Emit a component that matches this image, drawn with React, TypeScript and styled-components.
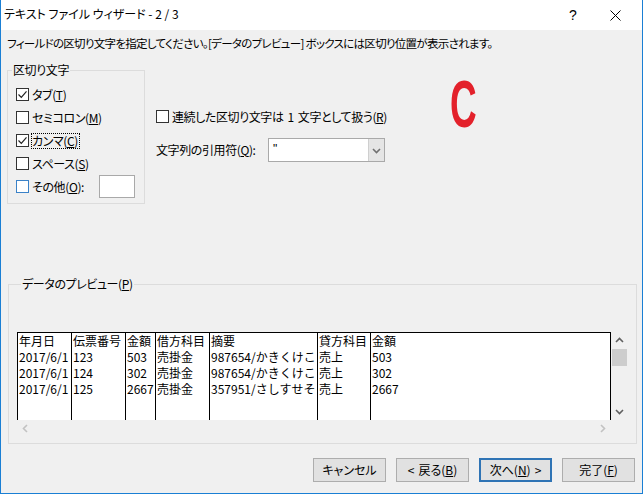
import React from "react";
import styled, { createGlobalStyle } from "styled-components";

const Global = createGlobalStyle`
  html, body { margin: 0; padding: 0; background: #f0f0f0; }
  * { box-sizing: border-box; }
  body { font-family: "Noto Sans CJK JP", "Noto Sans", sans-serif; font-size: 12px; color: #000; }
`;

const Window = styled.div`
  position: relative;
  width: 643px;
  height: 494px;
  border: 1px solid #1a7fd4;
  border-top: none;
  background: #f0f0f0;
  display: flex;
  flex-direction: column;
  overflow: hidden;
  font-feature-settings: "palt";
  letter-spacing: -0.4px;
`;

const TitleBar = styled.div`
  height: 30px;
  background: #fff;
  display: flex;
  align-items: center;
  padding-left: 3px;
  padding-right: 4px;
  flex-shrink: 0;
  letter-spacing: 0;
`;

const Title = styled.div`
  flex: 1;
  font-size: 12px;
  line-height: 14px;
  margin-top: -3px;
`;

const TitleButton = styled.div<{ $w: number }>`
  width: ${(p) => p.$w}px;
  height: 30px;
  display: flex;
  align-items: center;
  justify-content: center;
  font-size: 14px;
  font-family: "Liberation Sans", sans-serif;
`;

const Body = styled.div`
  flex: 1;
  display: flex;
  flex-direction: column;
  padding: 0 7px 9px 6px;
`;

const Instruction = styled.div`
  margin-top: 5px;
  line-height: 16px;
  font-size: 11.5px;
  letter-spacing: -0.7px;
  white-space: nowrap;
`;

const OptionsRow = styled.div`
  display: flex;
  margin-top: 12px;
  align-items: flex-start;
`;

const Group = styled.fieldset<{ $w?: number }>`
  margin: 0;
  ${(p) => (p.$w ? `width: ${p.$w}px;` : "")}
  border: 1px solid #dcdcdc;
  padding: 0;
  min-width: 0;
`;

const Legend = styled.legend`
  padding: 0 1px;
  margin-left: 4px;
  line-height: 14px;
  font-size: 12px;
`;

const DelimList = styled.div`
  display: flex;
  flex-direction: column;
  padding: 6px 0 5px 8px;
`;

const CheckRow = styled.label`
  display: flex;
  align-items: center;
  height: 23px;
  gap: 3px;
  line-height: 14px;
  white-space: nowrap;
`;

const Box = styled.span<{ $blue?: boolean }>`
  width: 13px;
  height: 13px;
  flex-shrink: 0;
  border: 1px solid ${(p) => (p.$blue ? "#3a82c8" : "#333")};
  background: #fff;
  display: flex;
  align-items: center;
  justify-content: center;
`;

const FocusText = styled.span`
  outline: 1px dotted #000;
  outline-offset: 0px;
  padding: 0 1px 0 0;
`;

const SmallInput = styled.div`
  width: 36px;
  height: 23px;
  background: #fff;
  border: 1px solid #a9a9a9;
  margin-left: 12px;
`;

const RightPanel = styled.div`
  display: flex;
  flex-direction: column;
  padding-top: 42px;
  margin-left: 11px;
`;

const Gap = styled.span`
  display: inline-block;
  width: 4px;
`;

const QuoteRow = styled.div`
  display: flex;
  align-items: center;
  margin-top: 10px;
`;

const QuoteLabel = styled.span`
  width: 112px;
  line-height: 14px;
`;

const Combo = styled.div`
  width: 117px;
  height: 24px;
  border: 1px solid #a9a9a9;
  background: #fff;
  display: flex;
`;

const ComboText = styled.div`
  flex: 1;
  padding-left: 4px;
  line-height: 20px;
  font-family: "Liberation Sans", sans-serif;
`;

const ComboButton = styled.div`
  width: 16px;
  background: #e5e5e5;
  border-left: 1px solid #cfcfcf;
  display: flex;
  align-items: center;
  justify-content: center;
`;

const PreviewGroup = styled(Group)`
  margin-top: 73px;
  margin-left: 1px;
  width: 629px;
  padding: 0 0 6px 8px;
`;

const PreviewArea = styled.div`
  margin-top: 41px;
  width: 612px;
  display: grid;
  grid-template-columns: 594px 17px;
  grid-template-rows: 88px 17px;
`;

const Table = styled.div`
  background: #fff;
  border: 1px solid #000;
  border-bottom: none;
  display: flex;
  overflow: hidden;
  font-feature-settings: normal;
  letter-spacing: 0;
  font-size: 12px;
`;

const Col = styled.div<{ $w?: number }>`
  ${(p) => (p.$w ? `width: ${p.$w}px; flex-shrink: 0; border-right: 1px solid #000;` : "flex: 1;")}
  overflow: hidden;
  padding-left: 1px;
`;

const Cell = styled.div`
  height: 16px;
  line-height: 16px;
  white-space: nowrap;
`;

const VScroll = styled.div`
  display: flex;
  flex-direction: column;
  align-items: center;
`;

const ArrowBox = styled.div`
  height: 17px;
  width: 17px;
  display: flex;
  align-items: center;
  justify-content: center;
`;

const Thumb = styled.div`
  width: 15px;
  height: 17px;
  background: #cdcdcd;
`;

const Track = styled.div`
  flex: 1;
`;

const HScroll = styled.div`
  display: flex;
  align-items: center;
  justify-content: space-between;
`;

const Corner = styled.div``;

const ButtonRow = styled.div`
  display: flex;
  justify-content: flex-end;
  gap: 10px;
  margin-top: 14px;
`;

const Button = styled.div<{ $focus?: boolean }>`
  width: 73px;
  height: 24px;
  background: #e1e1e1;
  border: ${(p) => (p.$focus ? "2px solid #2f74b5" : "1px solid #adadad")};
  display: flex;
  align-items: center;
  justify-content: center;
  line-height: 14px;
  white-space: nowrap;
  letter-spacing: 0;
`;

const RedC = styled.div`
  position: absolute;
  left: 449px;
  top: 69px;
  font-family: "Liberation Sans", sans-serif;
  font-weight: bold;
  font-size: 66px;
  line-height: 70px;
  letter-spacing: 0;
  color: #e3212b;
  transform: scaleX(0.56);
  transform-origin: left top;
`;

const Check = () => (
  <svg width="11" height="11" viewBox="0 0 11 11">
    <path d="M1.5 5.5 L4.3 8.3 L9.5 2.3" fill="none" stroke="#222" strokeWidth="1.2" />
  </svg>
);

const Chevron = ({ dir, color }: { dir: "up" | "down" | "left" | "right"; color: string }) => {
  const d =
    dir === "up"
      ? "M1 6 L4.5 2.5 L8 6"
      : dir === "down"
      ? "M1 3 L4.5 6.5 L8 3"
      : dir === "left"
      ? "M6 1 L2.5 4.5 L6 8"
      : "M3 1 L6.5 4.5 L3 8";
  return (
    <svg width="9" height="9" viewBox="0 0 9 9">
      <path d={d} fill="none" stroke={color} strokeWidth="1.6" />
    </svg>
  );
};

const columns: { w?: number; cells: string[] }[] = [
  { w: 54, cells: ["年月日", "2017/6/1", "2017/6/1", "2017/6/1"] },
  { w: 54, cells: ["伝票番号", "123", "124", "125"] },
  { w: 30, cells: ["金額", "503", "302", "2667"] },
  { w: 54, cells: ["借方科目", "売掛金", "売掛金", "売掛金"] },
  { w: 108, cells: ["摘要", "987654/かきくけこ", "987654/かきくけこ", "357951/さしすせそ"] },
  { w: 53, cells: ["貸方科目", "売上", "売上", "売上"] },
  { cells: ["金額", "503", "302", "2667"] },
];

export default function App() {
  return (
    <>
      <Global />
      <Window>
        <TitleBar>
          <Title>テキスト ファイル ウィザード - 2 / 3</Title>
          <TitleButton $w={38}>?</TitleButton>
          <TitleButton $w={46}>
            <svg width="11" height="11" viewBox="0 0 11 11">
              <path d="M0.5 0.5 L10.5 10.5 M10.5 0.5 L0.5 10.5" stroke="#000" strokeWidth="1" />
            </svg>
          </TitleButton>
        </TitleBar>
        <Body>
          <Instruction>
            フィールドの区切り文字を指定してください。[データのプレビュー] ボックスには区切り位置が表示されます。
          </Instruction>
          <OptionsRow>
            <Group $w={138}>
              <Legend>区切り文字</Legend>
              <DelimList>
                <CheckRow>
                  <Box><Check /></Box>
                  <span>タブ(<u>T</u>)</span>
                </CheckRow>
                <CheckRow>
                  <Box />
                  <span>セミコロン(<u>M</u>)</span>
                </CheckRow>
                <CheckRow>
                  <Box><Check /></Box>
                  <FocusText>カンマ(<u>C</u>)</FocusText>
                </CheckRow>
                <CheckRow>
                  <Box />
                  <span>スペース(<u>S</u>)</span>
                </CheckRow>
                <CheckRow>
                  <Box $blue />
                  <span>その他(<u>O</u>):</span>
                  <SmallInput />
                </CheckRow>
              </DelimList>
            </Group>
            <RightPanel>
              <CheckRow>
                <Box />
                <span>連続した区切り文字は<Gap />1<Gap />文字として扱う(<u>R</u>)</span>
              </CheckRow>
              <QuoteRow>
                <QuoteLabel>文字列の引用符(<u>Q</u>):</QuoteLabel>
                <Combo>
                  <ComboText>"</ComboText>
                  <ComboButton>
                    <Chevron dir="down" color="#707070" />
                  </ComboButton>
                </Combo>
              </QuoteRow>
            </RightPanel>
          </OptionsRow>
          <PreviewGroup>
            <Legend>データのプレビュー(<u>P</u>)</Legend>
            <PreviewArea>
              <Table>
                {columns.map((c, i) => (
                  <Col key={i} $w={c.w}>
                    {c.cells.map((t, j) => (
                      <Cell key={j}>{t}</Cell>
                    ))}
                  </Col>
                ))}
              </Table>
              <VScroll>
                <ArrowBox><Chevron dir="up" color="#606060" /></ArrowBox>
                <Thumb />
                <Track />
                <ArrowBox><Chevron dir="down" color="#606060" /></ArrowBox>
              </VScroll>
              <HScroll>
                <ArrowBox><Chevron dir="left" color="#c2c2c2" /></ArrowBox>
                <ArrowBox><Chevron dir="right" color="#c2c2c2" /></ArrowBox>
              </HScroll>
              <Corner />
            </PreviewArea>
          </PreviewGroup>
          <ButtonRow>
            <Button>キャンセル</Button>
            <Button>&lt;<Gap />戻る(<u>B</u>)</Button>
            <Button $focus>次へ(<u>N</u>)<Gap />&gt;</Button>
            <Button>完了(<u>F</u>)</Button>
          </ButtonRow>
        </Body>
        <RedC>C</RedC>
      </Window>
    </>
  );
}
